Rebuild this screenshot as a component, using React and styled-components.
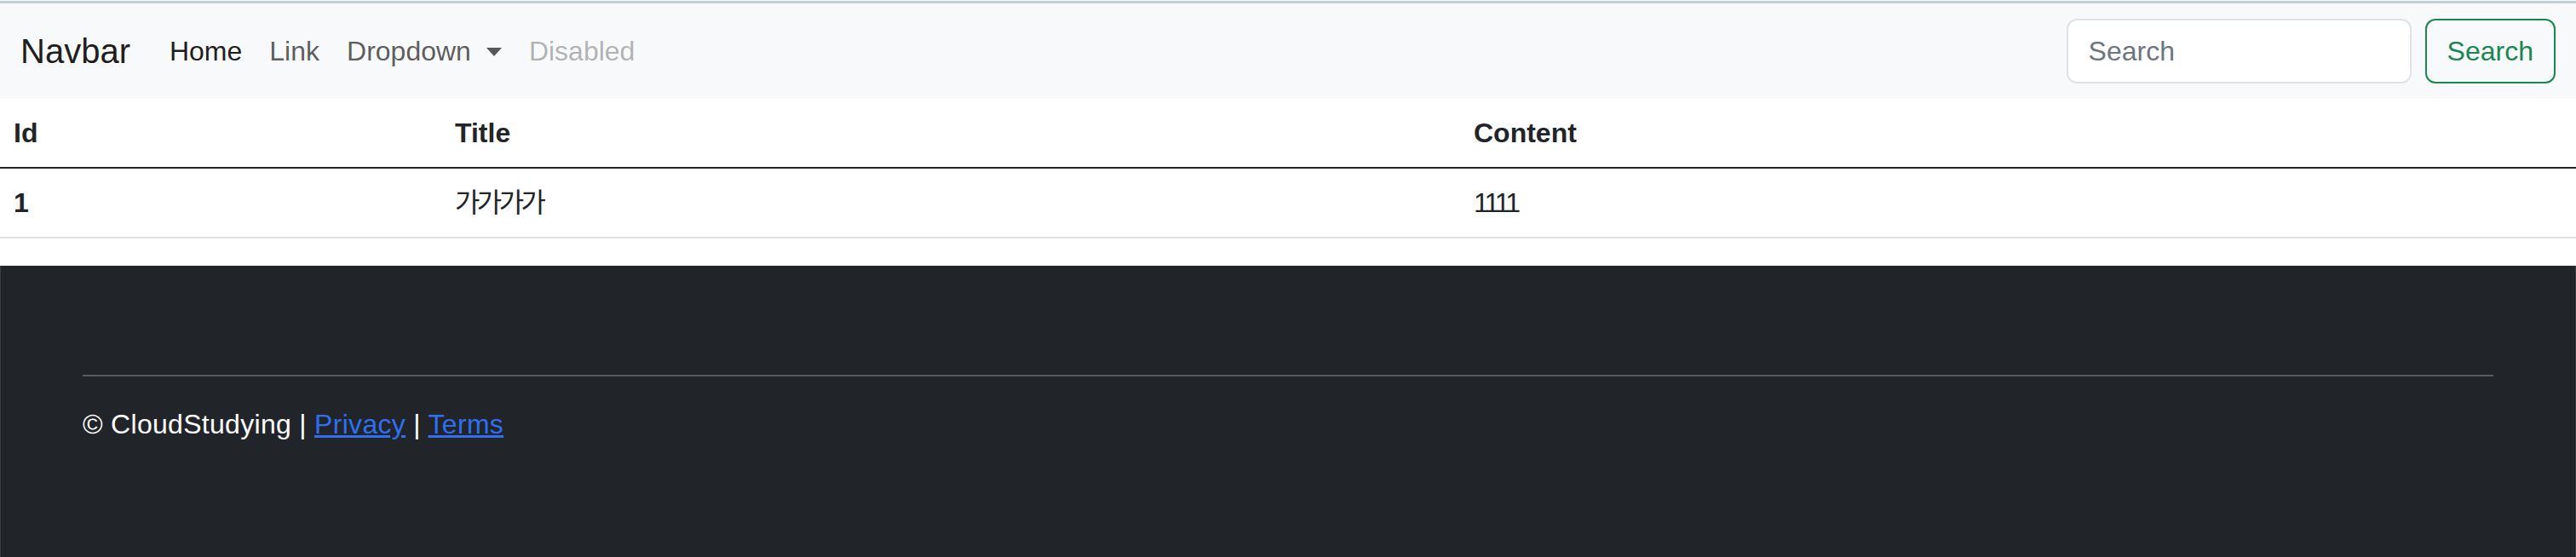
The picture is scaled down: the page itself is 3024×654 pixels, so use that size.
import React from 'react';
import styled, { createGlobalStyle } from 'styled-components';

const GlobalStyle = createGlobalStyle`
  * { box-sizing: border-box; }
  body {
    margin: 0;
    background: #fff;
    color: #212529;
    font-family: "Liberation Sans", "Noto Sans CJK KR", sans-serif;
    font-size: 32px;
    line-height: 1.5;
  }
`;

const Page = styled.div`
  padding-top: 1px;
  display: flex;
  flex-direction: column;
  min-height: 654px;
`;

const Navbar = styled.nav`
  border-top: 3px solid #bfd0db;
  background: #f8f9fa;
  height: 115px;
  padding: 16px 24px;
  display: flex;
  align-items: center;
  justify-content: space-between;
`;

const Left = styled.div`
  display: flex;
  align-items: center;
`;

const Brand = styled.a`
  font-size: 40px;
  color: rgba(0, 0, 0, 0.9);
  margin-right: 30px;
  padding: 10px 0;
  text-decoration: none;
`;

const NavList = styled.ul`
  display: flex;
  list-style: none;
  margin: 0;
  padding: 0;
`;

const NavLink = styled.a`
  display: flex;
  align-items: center;
  padding: 16px;
  text-decoration: none;
  color: ${({ $state }) =>
    $state === 'active'
      ? 'rgba(0,0,0,0.9)'
      : $state === 'disabled'
      ? 'rgba(0,0,0,0.3)'
      : 'rgba(0,0,0,0.65)'};
`;

const Caret = styled.span`
  display: inline-block;
  margin-left: 18px;
  border-top: 10px solid currentColor;
  border-left: 9px solid transparent;
  border-right: 9px solid transparent;
  margin-top: 2px;
`;

const SearchForm = styled.form`
  display: flex;
  gap: 16px;
`;

const SearchInput = styled.input`
  width: 405px;
  height: 76px;
  padding: 12px 24px;
  font: inherit;
  color: #212529;
  background: #fff;
  border: 2px solid #dee2e6;
  border-radius: 12px;
  outline: none;
  &::placeholder { color: #6c757d; }
`;

const SearchButton = styled.button`
  height: 76px;
  padding: 12px 24px;
  font: inherit;
  color: #198754;
  background: transparent;
  border: 2px solid #198754;
  border-radius: 12px;
`;

const Table = styled.table`
  width: 100%;
  border-collapse: collapse;
  margin-bottom: 32px;
`;

const Cell = styled.td`
  padding: 16px;
  text-align: left;
  vertical-align: top;
  font-weight: ${({ $bold }) => ($bold ? 700 : 400)};
  width: ${({ $w }) => $w || 'auto'};
  letter-spacing: ${({ $ls }) => $ls || 'normal'};
  height: 80px;
`;

const HeadRow = styled.tr`
  border-bottom: 2px solid #212529;
`;

const BodyRow = styled.tr`
  border-bottom: 2px solid #dee2e6;
`;

const Footer = styled.footer`
  flex: 1;
  background: #212529;
  color: #fff;
  padding: 96px 96px 100px;
  border-left: 1px solid #3a3e43;
  border-right: 1px solid #3a3e43;
`;

const Rule = styled.hr`
  margin: 32px 0;
  border: 0;
  border-top: 2px solid #595c5f;
`;

const Copy = styled.p`
  margin: 0 0 32px;
  letter-spacing: 0.3px;
`;

const FootLink = styled.a`
  color: #2f6ff0;
  text-decoration: underline;
`;

export default function App() {
  return (
    <Page>
      <GlobalStyle />
      <Navbar>
        <Left>
          <Brand href="#">Navbar</Brand>
          <NavList>
            <li><NavLink href="#" $state="active">Home</NavLink></li>
            <li><NavLink href="#">Link</NavLink></li>
            <li><NavLink href="#">Dropdown<Caret /></NavLink></li>
            <li><NavLink $state="disabled">Disabled</NavLink></li>
          </NavList>
        </Left>
        <SearchForm onSubmit={(e) => e.preventDefault()}>
          <SearchInput type="search" placeholder="Search" />
          <SearchButton type="submit">Search</SearchButton>
        </SearchForm>
      </Navbar>
      <Table>
        <thead>
          <HeadRow>
            <Cell as="th" $bold $w="518px">Id</Cell>
            <Cell as="th" $bold $w="1196px">Title</Cell>
            <Cell as="th" $bold>Content</Cell>
          </HeadRow>
        </thead>
        <tbody>
          <BodyRow>
            <Cell as="th" $bold>1</Cell>
            <Cell $ls="-3.6px">가가가가</Cell>
            <Cell $ls="-3px">1111</Cell>
          </BodyRow>
        </tbody>
      </Table>
      <Footer>
        <Rule />
        <Copy>
          © CloudStudying | <FootLink href="#">Privacy</FootLink> | <FootLink href="#">Terms</FootLink>
        </Copy>
      </Footer>
    </Page>
  );
}
